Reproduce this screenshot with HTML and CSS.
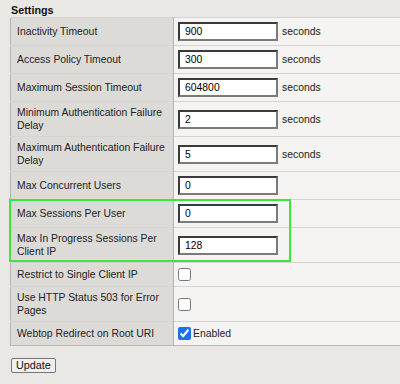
FILE: index.html
```html
<!DOCTYPE html>
<html lang="en">
<head>
  <meta charset="UTF-8" />
  <title>Settings</title>
  <link rel="stylesheet" href="styles.css">
</head>
<body>
  <h3 class="section-title">Settings</h3>

  <div class="settings-wrap">
    <table class="settings">
      <tr>
        <td class="label">Inactivity Timeout</td>
        <td class="value"><div class="field"><input type="text" value="900"><span>seconds</span></div></td>
      </tr>
      <tr>
        <td class="label">Access Policy Timeout</td>
        <td class="value"><div class="field"><input type="text" value="300"><span>seconds</span></div></td>
      </tr>
      <tr>
        <td class="label">Maximum Session Timeout</td>
        <td class="value"><div class="field"><input type="text" value="604800"><span>seconds</span></div></td>
      </tr>
      <tr>
        <td class="label">Minimum Authentication Failure Delay</td>
        <td class="value"><div class="field"><input type="text" value="2"><span>seconds</span></div></td>
      </tr>
      <tr>
        <td class="label">Maximum Authentication Failure Delay</td>
        <td class="value"><div class="field"><input type="text" value="5"><span>seconds</span></div></td>
      </tr>
      <tr>
        <td class="label">Max Concurrent Users</td>
        <td class="value"><div class="field"><input type="text" value="0"></div></td>
      </tr>
      <tr>
        <td class="label">Max Sessions Per User</td>
        <td class="value"><div class="field"><input type="text" value="0"></div></td>
      </tr>
      <tr>
        <td class="label">Max In Progress Sessions Per Client IP</td>
        <td class="value"><div class="field"><input type="text" value="128"></div></td>
      </tr>
      <tr>
        <td class="label">Restrict to Single Client IP</td>
        <td class="value"><div class="field"><input type="checkbox"></div></td>
      </tr>
      <tr>
        <td class="label">Use HTTP Status 503 for Error Pages</td>
        <td class="value"><div class="field"><input type="checkbox"></div></td>
      </tr>
      <tr>
        <td class="label">Webtop Redirect on Root URI</td>
        <td class="value"><div class="field"><input type="checkbox" checked><span>Enabled</span></div></td>
      </tr>
    </table>

    <div class="highlight"></div>
  </div>

  <button class="update-btn">Update</button>
</body>
</html>
```

FILE: styles.css
```css
* {
  box-sizing: border-box;
}

html, body {
  margin: 0;
  height: 100%;
  overflow: hidden;
}

body {
  background: #e9e8e5;
  font-family: "Liberation Sans", Arial, sans-serif;
  font-size: 10.4px;
  line-height: 13px;
  color: #222;
  padding: 4px 0 0 10px;
}

.section-title {
  margin: 0 0 0 1px;
  font-size: 10.8px;
  line-height: 13px;
  font-weight: bold;
  color: #111;
}

.settings-wrap {
  position: relative;
  width: 390px;
}

.settings {
  width: 390px;
  border-collapse: collapse;
  table-layout: fixed;
  border: 1px solid #b8b6b3;
  border-right: none;
}

.settings td {
  padding: 4px;
  vertical-align: middle;
  border-top: 1px solid #d6d4d1;
}

.settings td.label {
  width: 163px;
  padding-left: 6px;
  background: #dddbd8;
  border-right: 1px solid #b5b3b0;
}

.settings td.value {
  background: #f5f4f2;
}

.field {
  display: flex;
  align-items: center;
  gap: 4px;
}

.field input[type="text"] {
  width: 100px;
  height: 19px;
  margin: 0;
  padding: 0 5px;
  font-family: "Liberation Sans", Arial, sans-serif;
  font-size: 10.4px;
  color: #000;
  background: #fff;
  border: 2px solid #7a7a7a;
  border-top-color: #3a3a3a;
  border-left-color: #3a3a3a;
}

.field input[type="checkbox"] {
  width: 13px;
  height: 13px;
  margin: 1px 0;
  accent-color: #1a73e8;
}

.field input[type="checkbox"] + span {
  margin-left: -2px;
}

.highlight {
  position: absolute;
  left: -1px;
  top: 182px;
  width: 282px;
  height: 63px;
  border: 2px solid #3ce63c;
  pointer-events: none;
}

.update-btn {
  margin-top: 12px;
  margin-left: 1px;
  height: 15px;
  padding: 0 4px;
  font-family: "Liberation Sans", Arial, sans-serif;
  font-size: 10.8px;
  line-height: 11px;
  color: #111;
  background: #f0f0f0;
  border: 1px solid #767676;
  border-radius: 2px;
}
```
